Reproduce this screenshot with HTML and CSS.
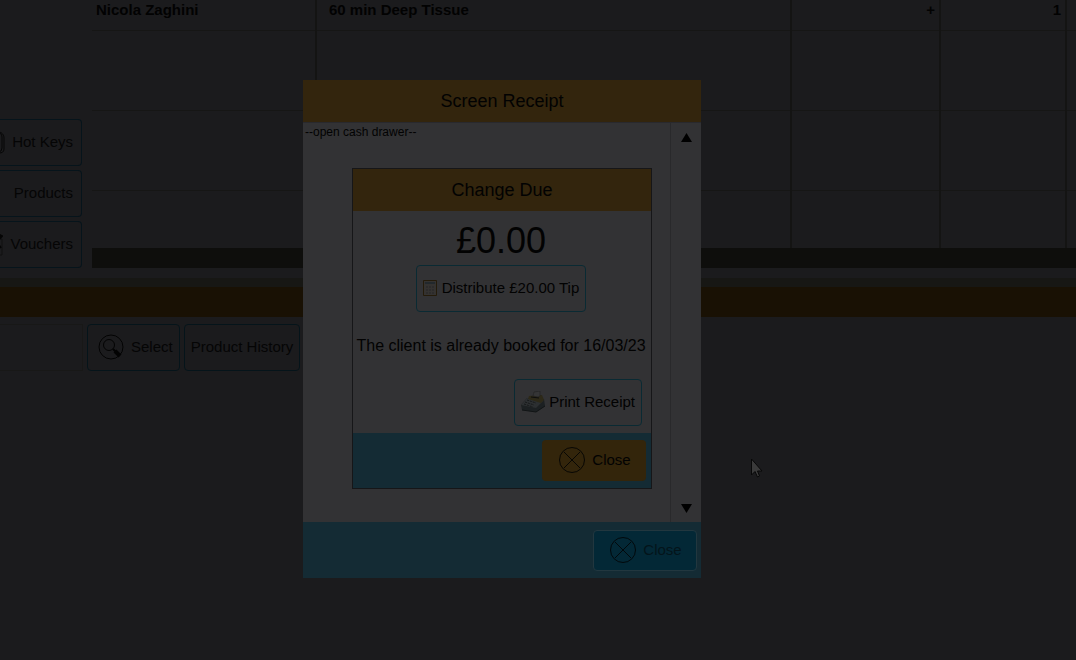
FILE: index.html
```html
<!DOCTYPE html>
<html lang="en">
<head>
    <meta charset="UTF-8">
    <meta name="viewport" content="width=device-width, initial-scale=1.0">
    <title>Screen Receipt</title>
    <link rel="stylesheet" href="styles.css">
</head>
<body>
    <!-- Till screen -->
    <main class="till">
        <div class="basket">
            <nav class="side-menu">
                <button class="button side-button" type="button">
                    <svg class="icon" width="28" height="28" viewBox="0 0 28 28" fill="none" stroke="#060606">
                        <path d="M15 20V9a5 5 0 0 1 10 0v11a4 4 0 0 1-8 0V9"/>
                        <path d="M21 4c4 0 6 3 6 6v11c0 3-2 4-5 4"/>
                    </svg>
                    Hot Keys
                </button>
                <button class="button side-button" type="button">Products</button>
                <button class="button side-button" type="button">
                    <svg class="icon" width="28" height="28" viewBox="0 0 28 28" fill="none" stroke="#101010">
                        <path d="M14 9h13v16H14z"/>
                        <path d="M17 6l9 12M23 8l2-3 2 1-3 3" stroke="#050505" stroke-width="2"/>
                    </svg>
                    Vouchers
                </button>
            </nav>
            <div class="basket-items">
                <table class="items">
                    <colgroup>
                        <col class="col-staff">
                        <col class="col-item">
                        <col class="col-add">
                        <col class="col-qty">
                        <col>
                    </colgroup>
                    <tbody>
                        <tr><td>Nicola Zaghini</td><td class="item-name">60 min Deep Tissue</td><td class="right">+</td><td class="right">1</td><td></td></tr>
                        <tr><td></td><td></td><td></td><td></td><td></td></tr>
                        <tr><td></td><td></td><td></td><td></td><td></td></tr>
                        <tr><td></td><td></td><td></td><td></td><td></td></tr>
                    </tbody>
                </table>
                <div class="items-footer"></div>
            </div>
        </div>
        <div class="divider"></div>
        <div class="section-bar"></div>
        <div class="toolbar">
            <input class="search" type="text" aria-label="Client">
            <button class="button select-button" type="button">
                <svg class="icon" width="26" height="26" viewBox="0 0 26 26" fill="none" stroke="#030303">
                    <circle cx="13" cy="13" r="12"/>
                    <circle cx="11" cy="11" r="5.5"/>
                    <path d="M15 15l3 3" stroke-width="2"/>
                    <path d="M17 17l5 5" stroke-width="4"/>
                </svg>
                Select
            </button>
            <button class="button" type="button">Product History</button>
        </div>
    </main>

    <!-- Receipt window -->
    <section class="dialog receipt">
        <h1 class="dialog-title">Screen Receipt</h1>
        <div class="receipt-body">
            <div class="receipt-page">
                <p class="receipt-text">--open cash drawer--</p>

                <!-- Change window -->
                <section class="dialog change">
                    <h2 class="dialog-title">Change Due</h2>
                    <div class="change-body">
                        <p class="amount">£0.00</p>
                        <button class="button tip-button" type="button">
                            <svg class="icon" width="14" height="16" viewBox="0 0 14 16">
                                <path d="M.5.5h13v15H.5z" fill="#343230" stroke="#241b0a"/>
                                <path d="M2 2h10v2H2z" fill="#22282c"/>
                                <path d="M3 7h2M6 7h2M9 7h2M3 10h2M6 10h2M9 10h2M3 13h2M6 13h2M9 13h2" stroke="#252527"/>
                            </svg>
                            Distribute £20.00 Tip
                        </button>
                        <p class="message">The client is already booked for 16/03/23</p>
                        <button class="button print-button" type="button">
                            <svg class="icon" width="24" height="22" viewBox="0 0 24 22">
                                <path d="M0 14L6 7l17 1 1 7-9 6L1 19z" fill="#1c2022"/>
                                <path d="M0 14L6 7l16 3-7 7z" fill="#2c2f31"/>
                                <path d="M8 5l13-1 2 5-3 3-13-4z" fill="#2d2918"/>
                                <path d="M12 5l1-4 6-1v5l-2 1z" fill="#353536" stroke="#1e1e1f" stroke-width=".5"/>
                                <path d="M10 6l8 1" stroke="#0e0e0e"/>
                                <path d="M6 9l9 3M4 11l9 3M3 13l9 3" stroke="#17191a" stroke-dasharray="2 1"/>
                                <path d="M1 19l14 2 9-6" fill="none" stroke="#111415"/>
                            </svg>
                            Print Receipt
                        </button>
                    </div>
                    <footer class="dialog-footer">
                        <button class="close-button gold" type="button">
                            <svg class="icon" width="26" height="26" viewBox="0 0 26 26" fill="none" stroke="#080704">
                                <circle cx="13" cy="13" r="12.5"/>
                                <path d="M5 5l16 16M21 5L5 21"/>
                            </svg>
                            Close
                        </button>
                    </footer>
                </section>
            </div>
            <div class="scrollbar">
                <button type="button" aria-label="Scroll up"><svg width="11" height="9" viewBox="0 0 11 9"><path d="M5.5 0L11 9H0z"/></svg></button>
                <button type="button" aria-label="Scroll down"><svg width="11" height="9" viewBox="0 0 11 9"><path d="M0 0h11L5.5 9z"/></svg></button>
            </div>
        </div>
        <footer class="dialog-footer">
            <button class="close-button blue" type="button">
                <svg class="icon" width="26" height="26" viewBox="0 0 26 26" fill="none" stroke="#02090c">
                    <circle cx="13" cy="13" r="12.5"/>
                    <path d="M5 5l16 16M21 5L5 21"/>
                </svg>
                Close
            </button>
        </footer>
    </section>

    <svg class="pointer" width="13" height="21" viewBox="0 0 13 21">
        <path d="M1.5 1v16L5 13.5 7.5 19l2-1-2-5H12z" fill="#3a3a3a" stroke="#080808"/>
    </svg>
</body>
</html>
```
FILE: styles.css
```css
* {
    margin: 0;
    padding: 0;
    box-sizing: border-box;
}

body {
    background-color: #1b1b1d;
    color: #020202;
    font-family: "Liberation Sans", Arial, sans-serif;
    font-size: 15px;
    min-height: 100vh;
    overflow: hidden;
}

button {
    font: inherit;
    color: inherit;
    background: none;
    border: none;
}

.icon {
    flex: none;
}

/* Till */
.till {
    color: #050505;
}

.basket {
    display: flex;
    gap: 10px;
    height: 268px;
}

.side-menu {
    display: flex;
    flex-direction: column;
    justify-content: flex-end;
    gap: 4px;
    width: 82px;
}

.button {
    display: flex;
    align-items: center;
    justify-content: center;
    gap: 7px;
    height: 47px;
    padding: 0 6px 2px;
    border: 1px solid #06141b;
    border-radius: 4px;
    white-space: nowrap;
}

.side-button {
    justify-content: flex-end;
    padding-right: 8px;
    border-left: none;
    border-radius: 0 4px 4px 0;
}

.basket-items {
    flex: 1;
}

.items {
    width: 100%;
    table-layout: fixed;
    border-collapse: collapse;
    font-weight: bold;
}

.col-staff {
    width: 224px;
}

.col-item {
    width: 475px;
}

.col-add {
    width: 149px;
}

.col-qty {
    width: 126px;
}

.items td {
    height: 80px;
    padding: 0 4px;
    border-right: 2px solid #141413;
    border-bottom: 1px solid #161615;
}

.items td:last-child {
    border-right: none;
}

.items tr:first-child td {
    height: 30px;
    padding-bottom: 10px;
    color: #020202;
}

.items tr:last-child td {
    height: 58px;
    border-bottom: none;
}

.items .item-name {
    padding-left: 12px;
}

.items .right {
    text-align: right;
}

.items-footer {
    height: 20px;
    background-color: #0e0e0c;
}

.divider {
    height: 19px;
    border-bottom: 9px solid #171714;
}

.section-bar {
    height: 30px;
    background-color: #191104;
}

.toolbar {
    display: flex;
    gap: 4px;
    padding-top: 7px;
}

.search {
    width: 83px;
    background: none;
    border: 1px solid #181817;
    border-left: none;
}

.toolbar .button {
    border-color: #05141a;
}

.toolbar .select-button {
    padding-left: 10px;
}

/* Dialogs */
.dialog-title {
    height: 42px;
    line-height: 42px;
    background-color: #33250d;
    font-size: 18px;
    font-weight: normal;
    text-align: center;
}

.dialog-footer {
    display: flex;
    justify-content: flex-end;
    background-color: #142b34;
}

.receipt {
    position: absolute;
    top: 80px;
    left: 303px;
    width: 398px;
    background-color: #323234;
}

.receipt-body {
    display: flex;
    height: 400px;
    border-top: 1px solid #29292d;
}

.receipt-page {
    flex: 1;
}

.receipt-text {
    height: 45px;
    padding: 2px;
    font-size: 12px;
    line-height: 14px;
}

.receipt > .dialog-footer {
    padding: 8px 4px 7px;
}

.scrollbar {
    display: flex;
    flex-direction: column;
    justify-content: space-between;
    width: 31px;
    padding: 4px 0 6px;
    border-left: 1px solid #29292b;
}

.scrollbar button {
    height: 18px;
}

.change {
    width: 300px;
    margin-left: 49px;
    border: 1px solid #161618;
}

.change-body {
    display: flex;
    flex-direction: column;
    align-items: center;
    padding: 8px 9px 7px 7px;
}

.change-body .button {
    border-color: #0a2a33;
}

.change-body .tip-button {
    gap: 5px;
}

.change-body .print-button {
    align-self: flex-end;
    gap: 4px;
}

.amount {
    padding-bottom: 2px;
    font-size: 36px;
    line-height: 44px;
}

.message {
    padding: 22px 0;
    font-size: 16px;
    line-height: 23px;
    white-space: nowrap;
}

.change .dialog-footer {
    padding: 7px 5px;
}

.close-button {
    display: flex;
    align-items: center;
    justify-content: center;
    gap: 7px;
    width: 104px;
    height: 41px;
    padding: 0 0 2px 2px;
    border-radius: 4px;
}

.gold {
    background-color: #33250b;
}

.blue {
    background-color: #032836;
    border: 1px solid #22373f;
    color: #03141a;
}

.pointer {
    position: absolute;
    top: 458px;
    left: 750px;
}
```
